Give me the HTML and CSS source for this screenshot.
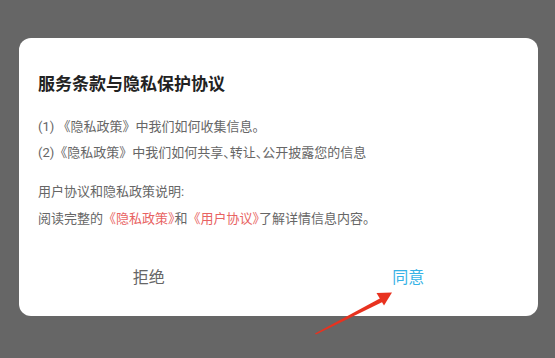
FILE: index.html
```html
<!DOCTYPE html>
<html lang="zh-CN">
<head>
<meta charset="utf-8">
<link rel="stylesheet" href="styles.css">
</head>
<body>
<div class="screen">
  <div class="dialog">
    <div class="content">
      <h1 class="title">服务条款与隐私保护协议</h1>
      <div class="group">
        <p class="line">(1) 《隐私政策》中我们如何收集信息。</p>
        <p class="line">(2)《隐私政策》中我们如何共享<span class="half">、</span>转让<span class="half">、</span>公开披露您的信息</p>
      </div>
      <div class="group second">
        <p class="line">用户协议和隐私政策说明:</p>
        <p class="line">阅读完整的<span class="link">《隐私政策<span class="half">》</span></span>和<span class="link">《用户协议<span class="half">》</span></span>了解详情信息内容。</p>
      </div>
    </div>
    <div class="actions">
      <div class="btn reject">拒绝</div>
      <div class="btn agree">同意</div>
    </div>
  </div>
  <svg class="arrow" width="555" height="358" viewBox="0 0 555 358">
    <polygon points="315,333.5 383.5,296.5 385.5,300.5 316,334.5" fill="#e8321f"/>
    <polygon points="376.5,293 392,292.5 384,305.5" fill="#e8321f"/>
  </svg>
</div>
</body>
</html>
```

FILE: styles.css
```css
* {
  box-sizing: border-box;
}

html, body {
  margin: 0;
  padding: 0;
}

body {
  background: #666666;
  font-family: Roboto, "Noto Sans CJK SC", sans-serif;
}

.screen {
  position: relative;
  width: 555px;
  height: 358px;
  padding-top: 38px;
  padding-left: 19px;
}

.dialog {
  width: 519px;
  height: 278px;
  background: #ffffff;
  border-radius: 12px;
  display: flex;
  flex-direction: column;
}

.content {
  padding: 38px 19px 0 19px;
}

.title {
  margin: 0;
  font-size: 17px;
  line-height: 17px;
  font-weight: bold;
  color: #222222;
}

.group {
  margin-top: 21px;
}

.group.second {
  margin-top: 12px;
}

.line {
  margin: 0;
  font-size: 13px;
  line-height: 26px;
  color: #666666;
  white-space: nowrap;
}

.second .line {
  line-height: 27px;
}

.half {
  font-feature-settings: "halt";
}

.link {
  color: #e86262;
}

.actions {
  display: flex;
  margin-top: 23px;
}

.btn {
  flex: 1;
  text-align: center;
  font-size: 16px;
  line-height: 46px;
}

.reject {
  color: #666666;
}

.agree {
  color: #36b2e6;
}

.arrow {
  position: absolute;
  left: 0;
  top: 0;
  pointer-events: none;
}
```
